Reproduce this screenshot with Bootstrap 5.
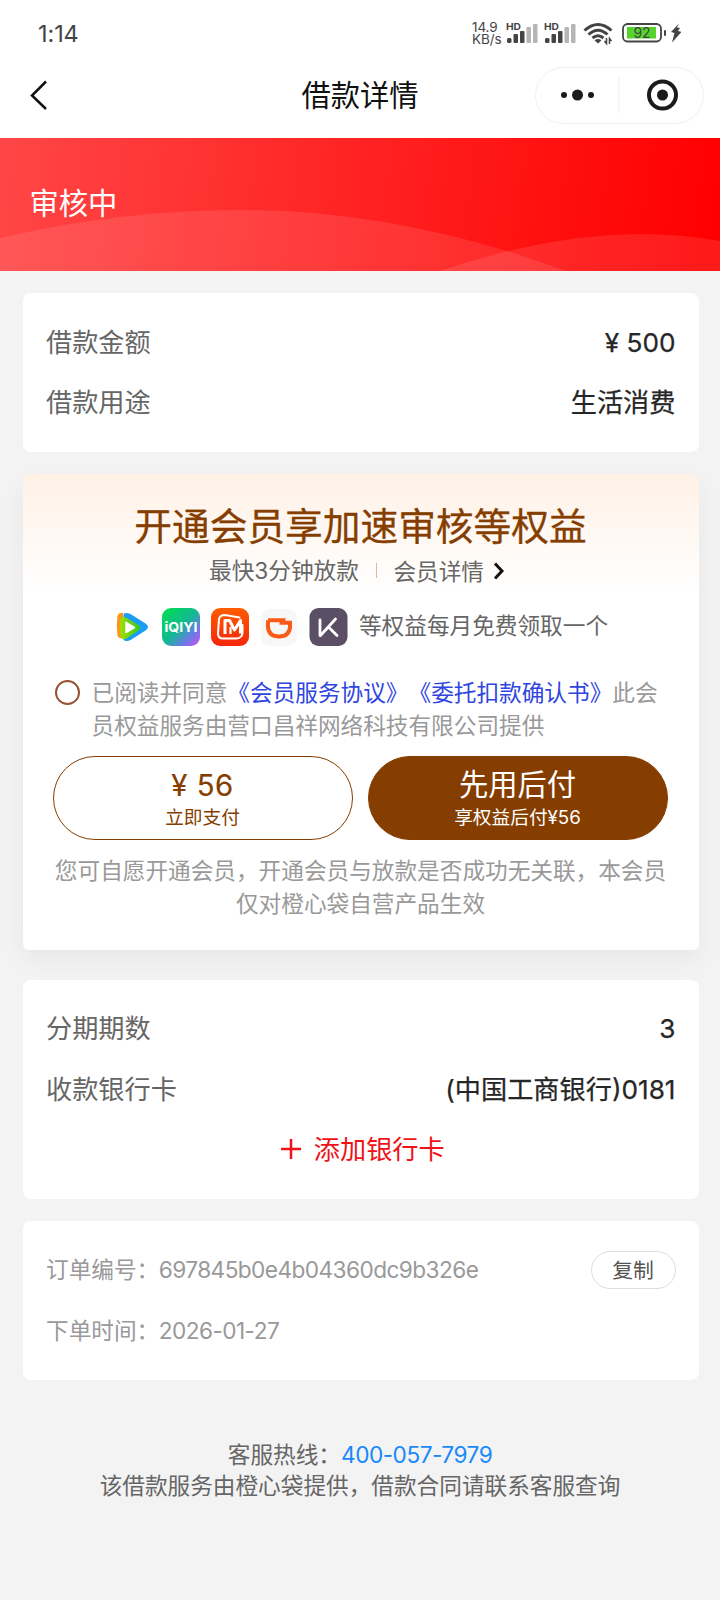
<!DOCTYPE html>
<html lang="zh-CN">
<head>
<meta charset="utf-8">
<meta name="viewport" content="width=device-width, initial-scale=1">
<title>借款详情</title>
<link href="https://cdn.jsdelivr.net/npm/bootstrap@5.3.0/dist/css/bootstrap.min.css" rel="stylesheet">
<style>
body{background:#f3f3f3;font-family:"Noto Sans CJK SC",sans-serif;font-size:22.65px;color:#666;overflow-x:hidden}
.num{font-family:Inter,"Noto Sans CJK SC",sans-serif}
.top-area{height:138px}
.status{height:66px;padding:0 39px 0 38px;color:#444}
.clock{font-size:23.5px;letter-spacing:-.1px;margin-top:2px}
.speed{font-size:13.5px;line-height:12.5px;color:#444;width:34px;letter-spacing:-.1px}
.navrow{height:58px;padding-left:28px;padding-right:16px}
.navrow h1{font-size:29.3px;line-height:40px;color:#111;font-weight:400;margin-top:-5px}
.capsule{width:169px;height:57px;border:1.5px solid #f1f1f1}
.banner{height:132.5px;background:linear-gradient(98deg,#ff4646 0%,#ff2222 50%,#f00 98%);color:#fff;font-size:29.3px}
.banner span{padding-left:29.5px;line-height:127px}
.panel{margin:0 21.5px 22px 22.5px;border-radius:8px;background:#fff;padding:18px 23px 20px 23.5px}
.line{height:60.5px;font-size:26.2px}
.line .val{color:#262626;-webkit-text-stroke:.25px #262626}
.line .val.num{margin-top:2px}
.member{height:475.5px;padding:0 30px;background:linear-gradient(#fff1e6 0,#fff 118px);box-shadow:0 10px 26px rgba(0,0,0,.05);margin-bottom:30px;border-radius:6px}
.member h2{font-size:37.7px;line-height:50px;color:#853e00;padding-top:25px;font-weight:400;-webkit-text-stroke:.3px #853e00}
.sub{line-height:34px;margin-top:4px;padding-right:6px}
.sep{width:1.5px;height:15px;background:#dcb9a0;margin:0 16px 0 17px}
.apps{height:40px;margin-top:18.5px;padding-left:2px}
.apps span{margin:-3px 0 0 11px}
.agree{line-height:32.6px;color:#999;margin-top:29.5px;padding-left:1px}
.agree a{color:#2f45e0}
.tick{width:25px;height:25px;border:2px solid #98522f;margin:4px 12px 0 1px}
.pay{width:300px;height:84px;border:1.6px solid #853e00;color:#853e00;background:#fff}
.pay.solid{background:#853e00;color:#fff}
.pay .big{font-size:29.3px;line-height:36px;margin-top:7px}
.pay .big.num{margin-top:11px;margin-bottom:-4px;letter-spacing:.5px;-webkit-text-stroke:.2px #853e00}
.pay .little{font-size:18.7px;line-height:26px;margin-top:3px}
.notice{line-height:32.6px;color:#999;margin-top:14px}
.faint{color:#999;font-size:22.65px}
.faint .num{letter-spacing:-.57px;margin-top:2px;margin-left:-.5px}
.copy{width:85px;height:38.5px;border:1.2px solid #ddd;color:#555;font-size:20.8px;line-height:33px;background:#fff;padding:0;margin-top:1px}
.footer-info{margin-top:58.5px;line-height:30.3px}
.footer-info a{color:#1989fa;letter-spacing:-.5px}
</style>
</head>
<body>
<header class="top-area bg-white">
  <div class="status d-flex align-items-center">
    <span class="clock num">1:14</span>
    <div class="speed num ms-auto">14.9<br>KB/s</div>
    <svg width="175" height="30" viewBox="506 18 175 30" fill="#444">
      <g id="sig">
        <text x="506" y="30" font-family="Inter" font-size="9.5" font-weight="700" textLength="15" lengthAdjust="spacingAndGlyphs">HD</text>
        <rect x="507" y="38" width="4.500" height="5" rx="1.500"/><rect x="513.500" y="34" width="4.500" height="9" rx="1"/><rect x="520" y="31" width="4.500" height="12" rx="1"/>
        <rect x="526.500" y="27" width="4.500" height="16" rx="1" fill="#b5b5b5"/><rect x="533" y="24" width="4.500" height="19" rx="1" fill="#b5b5b5"/>
      </g>
      <use href="#sig" x="38"/>
      <g fill="none" stroke="#444" stroke-width="3"><path d="M584.500 30.500Q598 18.500 611.500 30.500"/><path d="M588.500 34.500Q598 26 607.500 34.500"/><path d="M592.500 38Q598 33.500 603.500 38"/></g>
      <path d="M594.500 40.300Q598 37.500 601.500 40.300L598 43.500Z"/>
      <path d="M606.500 38v5.500l-2-2.500M609.500 44v-5.500l2 2.500" fill="none" stroke="#444" stroke-width="1.500"/>
      <rect x="623" y="24" width="38" height="17.500" rx="4.500" fill="#fff" stroke="#444" stroke-width="1.800"/>
      <rect x="627" y="27" width="29" height="11.500" fill="#55d42c"/>
      <text x="642" y="38" font-family="Inter" font-size="14" text-anchor="middle">92</text>
      <rect x="664" y="30" width="2" height="6" rx="1"/>
      <path d="M679 23.500L671 32l3.500 1-2.500 9.500 9.500-10.500-3.500-1 2-3-3-.5z"/>
    </svg>
  </div>
  <div class="navrow d-flex align-items-center position-relative">
    <svg width="22" height="32" viewBox="0 0 22 32" fill="none" stroke="#111" stroke-width="2.500"><path d="M18 2.500 4 16.500 18 30"/></svg>
    <h1 class="mb-0 position-absolute start-50 translate-middle-x">借款详情</h1>
    <div class="capsule rounded-pill ms-auto d-flex align-items-center">
      <svg width="166" height="54" viewBox="0 0 166 54" fill="#1b1b1b"><circle cx="28" cy="27" r="3"/><circle cx="41.500" cy="27" r="5.500"/><circle cx="55" cy="27" r="3"/><rect x="82.500" y="9" width="1" height="36" fill="#eee"/><circle cx="126.500" cy="27" r="13.500" fill="none" stroke="#1b1b1b" stroke-width="4"/><circle cx="126.500" cy="27" r="5.500"/></svg>
    </div>
  </div>
</header>

<section class="banner position-relative overflow-hidden mb-0">
  <svg class="position-absolute top-0 start-0" width="720" height="133" viewBox="0 0 720 133">
    <path d="M0 100Q120 72 240 72Q400 72 566 133H0Z" fill="#fff" fill-opacity=".1"/>
    <path d="M440 133Q545 97 640 96Q680 96 720 103V133Z" fill="#fff" fill-opacity=".1"/>
  </svg>
  <span class="position-relative d-block">审核中</span>
</section>

<main style="padding-top:22.500px">
  <section class="panel">
    <div class="line d-flex justify-content-between align-items-center"><span>借款金额</span><span class="val num">¥ 500</span></div>
    <div class="line d-flex justify-content-between align-items-center"><span>借款用途</span><span class="val">生活消费</span></div>
  </section>

  <section class="panel member">
    <h2 class="text-center mb-0">开通会员享加速审核等权益</h2>
    <div class="sub d-flex justify-content-center align-items-center">
      <span>最快<span class="num">3</span>分钟放款</span><i class="sep"></i><span>会员详情</span>
      <svg class="ms-2" width="14" height="20" viewBox="0 0 14 20" fill="none" stroke="#111" stroke-width="3"><path d="M3 2.500 10 10 3 17.500"/></svg>
    </div>
    <div class="apps d-flex justify-content-center align-items-center">
      <svg width="233" height="40" viewBox="115 606 233 40">
        <defs>
          <linearGradient id="iq" x1="0" y1="0" x2="1" y2="1"><stop offset="0" stop-color="#00e04c"/><stop offset=".5" stop-color="#14b893"/><stop offset=".75" stop-color="#6b7be5"/><stop offset="1" stop-color="#c84ef0"/></linearGradient>
          <linearGradient id="mg" x1="0" y1="0" x2="0" y2="1"><stop offset="0" stop-color="#ff5d00"/><stop offset="1" stop-color="#f5260b"/></linearGradient>
          <linearGradient id="gr" x1="0" y1="0" x2="1" y2="0"><stop offset="0" stop-color="#a0e000"/><stop offset="1" stop-color="#35c525"/></linearGradient>
        </defs>
        <path d="M123 612q-4-1-5.500 3-1.500 10 0 20 1.500 3 6.500 2z" fill="#ff9418"/>
        <path d="M123.500 613q2-2 7 0l15 9.500q5 3.500 0 7l-14 9q-6 3-8 0z" fill="#1c9df5"/>
        <path d="M120.500 618q1-4 6-1l12 7q4 2.500 0 5.500l-12 8q-5 2-6-2-1.500-9 0-17.500z" fill="url(#gr)"/>
        <path d="M126 621.500v10l8.500-5z" fill="#fff" stroke="#fff" stroke-width="1.500" stroke-linejoin="round"/>
        <rect x="162" y="607" width="38" height="38" rx="9" fill="url(#iq)"/>
        <text x="181" y="631" text-anchor="middle" font-family="Inter" font-size="13" font-weight="700" fill="#fff" textLength="33" lengthAdjust="spacingAndGlyphs">iQIYI</text>
        <rect x="211" y="607" width="38" height="38" rx="9" fill="url(#mg)"/>
        <path d="M239.500 616.500L225 614q-5 0-6 4l-1 14.500q0 5 5 5h13.500q5.500-.5 6-5.500v-8" fill="none" stroke="#fff" stroke-width="2" stroke-linecap="round"/>
        <path d="M225 633V619.500h4.500L234.500 629 240.500 619.500V632.500" fill="none" stroke="#fff" stroke-width="3" stroke-linejoin="round"/>
        <path d="M230.500 626v7" stroke="#fff" stroke-width="2.200"/>
        <rect x="261" y="608" width="36" height="37" rx="9" fill="#f7f7f8"/>
        <path d="M268 619.300h17.500M268 619.300v7.200q1 9 11 9t11-9V621.800H279.500" fill="none" stroke="#fa5b16" stroke-width="4"/>
        <rect x="309.500" y="607" width="38" height="38" rx="9" fill="#5a4f65"/>
        <path d="M320 619v15.500M335.500 618 320.500 634.500M329.500 627l7.500 7.500" fill="none" stroke="#fff" stroke-width="2.800" stroke-linecap="round"/>
      </svg>
      <span>等权益每月免费领取一个</span>
    </div>
    <div class="agree d-flex"><i class="tick rounded-circle flex-shrink-0"></i>
      <div class="text-nowrap">已阅读并同意<a class="text-decoration-none d-inline-block">《会员服务协议》</a><a class="text-decoration-none d-inline-block">《委托扣款确认书》</a>此会<br>员权益服务由营口昌祥网络科技有限公司提供</div></div>
    <div class="d-flex" style="gap:15px;margin-top:15px">
      <div class="pay rounded-pill text-center"><div class="big num">¥ 56</div><div class="little">立即支付</div></div>
      <div class="pay solid rounded-pill text-center"><div class="big">先用后付</div><div class="little">享权益后付<span class="num">¥56</span></div></div>
    </div>
    <div class="notice text-center text-nowrap">您可自愿开通会员，开通会员与放款是否成功无关联，本会员<br>仅对橙心袋自营产品生效</div>
  </section>

  <section class="panel">
    <div class="line d-flex justify-content-between align-items-center"><span>分期期数</span><span class="val num">3</span></div>
    <div class="line d-flex justify-content-between align-items-center"><span>收款银行卡</span><span class="val num">(中国工商银行)0181</span></div>
    <div class="line d-flex justify-content-center align-items-center" style="color:#f01218;padding-left:3px"><svg style="margin-right:12px" width="22" height="22" viewBox="0 0 22 22" stroke="#f01218" stroke-width="2.500"><path d="M1 11h20M11 1v20"/></svg>添加银行卡</div>
  </section>

  <section class="panel mb-0">
    <div class="line faint d-flex align-items-center"><span>订单编号：</span><span class="num">697845b0e4b04360dc9b326e</span><button class="copy rounded-pill ms-auto">复制</button></div>
    <div class="line faint d-flex align-items-center"><span>下单时间：</span><span class="num">2026-01-27</span></div>
  </section>

  <footer class="footer-info text-center">客服热线：<a class="num text-decoration-none">400-057-7979</a><br>该借款服务由橙心袋提供，借款合同请联系客服查询</footer>
</main>
<script src="https://cdn.jsdelivr.net/npm/bootstrap@5.3.0/dist/js/bootstrap.bundle.min.js"></script>
</body>
</html>
